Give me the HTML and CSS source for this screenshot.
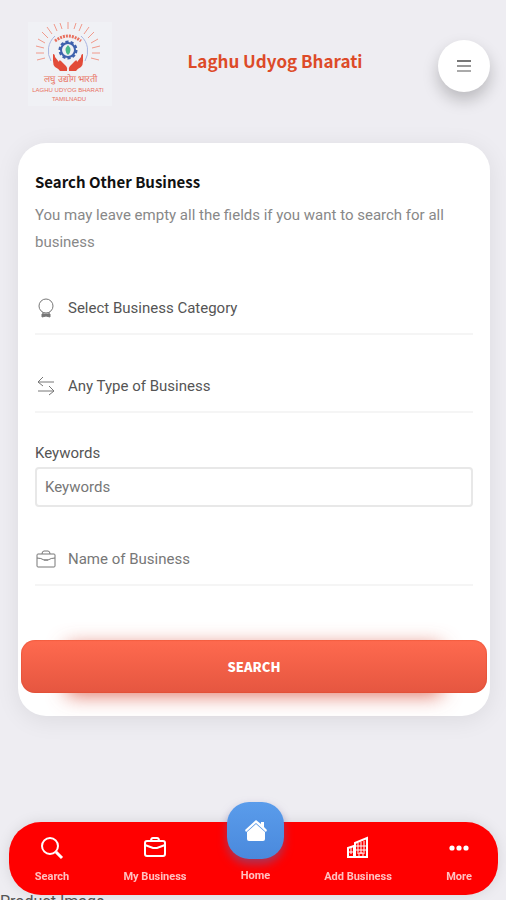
FILE: index.html
```html
<!DOCTYPE html>
<html lang="en">
<head>
    <meta charset="UTF-8">
    <meta name="viewport" content="width=device-width, initial-scale=1.0">
    <title>Laghu Udyog Bharati</title>
    <link rel="stylesheet" href="styles.css">
</head>
<body>
    <header class="header">
        <a href="#" class="logo" aria-label="Laghu Udyog Bharati Tamilnadu">
            <svg viewBox="0 0 84 84" width="84" height="84">
                <!-- sun rays -->
                <g fill="none" stroke="#f09a8c">
                    <path d="M17 36l-8 2M16 31l-8 0M16 26l-8-2M17 21l-7-4M20 16l-6-6M24 12l-5-7M29 9l-3-7M34 7l-2-6M40 7V0M46 7l2-6M51 9l3-7M56 12l5-7M60 16l6-6M63 21l7-4M64 26l8-2M64 31h8M63 36l8 2"/>
                    <path d="M27 19Q40 9 53 19" stroke="#e8705f" stroke-width="3" stroke-dasharray="2 1"/>
                </g>
                <path d="M23 39A20 20 0 0 1 27 14M53 14A20 20 0 0 1 57 39" fill="none" stroke="#a9b5e2"/>
                <!-- gear -->
                <circle cx="40" cy="28" r="8" fill="none" stroke="#3f62ad" stroke-width="3" stroke-dasharray="3 2"/>
                <circle cx="40" cy="28" r="7" fill="none" stroke="#3f62ad" stroke-width="2"/>
                <path d="M40 23q-5 5 0 10q5-5 0-10z" fill="#49b98b"/>
                <!-- hands -->
                <g fill="#e24b39">
                    <path d="M25 32q2 0 2 3l4 5q0-3 2-1l5 5q2 2 1 5h-7q-1-2-5-4q-2-2-2-6z"/>
                    <path d="M55 32q-2 0-2 3l-4 5q0-3-2-1l-5 5q-2 2-1 5h7q1-2 5-4q2-2 2-6z"/>
                </g>
                <g class="logo-text" text-anchor="middle">
                    <text x="43" y="60" class="logo-hindi">लघु उद्योग भारती</text>
                    <text x="40" y="70">LAGHU UDYOG BHARATI</text>
                    <text x="41" y="79">TAMILNADU</text>
                </g>
            </svg>
        </a>
        <h1 class="title">Laghu Udyog Bharati</h1>
        <button class="menu-btn" type="button" aria-label="Menu">
            <svg viewBox="0 0 14 14" width="14" height="14" fill="none" stroke-width="2">
                <path d="M0 2h14" stroke="#777"/>
                <path d="M0 7h14" stroke="#999"/>
                <path d="M0 12h14" stroke="#aaa"/>
            </svg>
        </button>
    </header>

    <main>
        <form class="card">
            <h2>Search Other Business</h2>
            <p class="intro">You may leave empty all the fields if you want to search for all business</p>

            <div class="field">
                <svg viewBox="0 0 22 22" width="22" height="22" fill="none" stroke="#777">
                    <circle cx="11" cy="9" r="7"/>
                    <path d="M8 15v2M14 15v2"/>
                    <path d="M7 17h8v3l-4-1l-4 1z" fill="#777"/>
                </svg>
                <select aria-label="Business category">
                    <option>Select Business Category</option>
                </select>
            </div>

            <div class="field">
                <svg viewBox="0 0 22 22" width="22" height="22" fill="none" stroke="#777">
                    <path d="M8 2L3 7l5 4M3 7h16"/>
                    <path d="M14 11l5 5l-5 4M19 16H3"/>
                </svg>
                <select aria-label="Type of business">
                    <option>Any Type of Business</option>
                </select>
            </div>

            <label class="keywords-label" for="keywords">Keywords</label>
            <input class="keywords" type="text" id="keywords" placeholder="Keywords">

            <div class="field">
                <svg viewBox="0 0 22 22" width="22" height="22" fill="none" stroke="#777">
                    <rect x="2" y="6" width="18" height="13" rx="1"/>
                    <path d="M7 6q0-3 2-3h4q2 0 2 3M2 10q4 0 7 2h4q3-2 7-2M9 12h4"/>
                </svg>
                <input type="text" aria-label="Name of business" placeholder="Name of Business">
            </div>

            <button class="search-btn" type="submit">SEARCH</button>
        </form>
        <p class="product">Product Image</p>
    </main>

    <nav class="tabbar">
        <a href="#">
            <svg viewBox="0 0 24 24" width="24" height="24" fill="none" stroke="#fff" stroke-width="2">
                <circle cx="10" cy="10" r="8"/>
                <path d="M16 16l6 6" stroke-width="3"/>
            </svg>
            <span>Search</span>
        </a>
        <a href="#">
            <svg viewBox="0 0 24 24" width="24" height="24" fill="none" stroke="#fff" stroke-width="2">
                <rect x="2" y="5" width="20" height="15" rx="2"/>
                <path d="M8 5q0-3 2-3h4q2 0 2 3M2 9l8 3h4l8-3"/>
            </svg>
            <span>My Business</span>
        </a>
        <a href="#">
            <span class="home-icon">
                <svg viewBox="0 0 24 24" width="24" height="24" fill="#fff">
                    <path d="M12 1L1 11l1 2L12 4l10 9l1-2l-3-3V3h-3v2z"/>
                    <path d="M12 5l9 8v7q0 2-2 2H5q-2 0-2-2v-7z"/>
                </svg>
            </span>
            <span>Home</span>
        </a>
        <a href="#">
            <svg viewBox="0 0 24 24" width="24" height="24" fill="none" stroke="#fff" stroke-width="2">
                <path d="M2 21V12l6-2v11M9 21V7l12-5v19M1 21h21"/>
                <path d="M2 16h6M5 11v7M12 7v11M15 6v12M18 5v13M9 10h12M9 14h12M13 21v-4h4v4" stroke-width="1"/>
            </svg>
            <span>Add Business</span>
        </a>
        <a href="#">
            <svg viewBox="0 0 24 24" width="24" height="24" fill="#fff">
                <circle cx="5" cy="12" r="2.6"/>
                <circle cx="12" cy="12" r="2.6"/>
                <circle cx="19" cy="12" r="2.6"/>
            </svg>
            <span>More</span>
        </a>
    </nav>
</body>
</html>
```

FILE: styles.css
```css
* {
    box-sizing: border-box;
}
body {
    margin: 0;
    height: 100vh;
    overflow: hidden;
    background: #eeedf2;
    font-family: Roboto, sans-serif;
    font-size: 15px;
    color: #555;
}
input, select, button {
    font-family: inherit;
    font-size: inherit;
}
.header {
    display: flex;
    align-items: center;
    justify-content: space-between;
    padding: 22px 16px 0 28px;
}
.logo {
    display: block;
    height: 84px;
    background: #f0f1f5;
}
.logo-text {
    font-family: "Liberation Sans", sans-serif;
    font-size: 6px;
    fill: #e8705f;
}
.logo-hindi {
    font-size: 9px;
}
.title {
    margin: 0;
    padding-bottom: 6px;
    font-family: "Noto Sans CJK SC", sans-serif;
    font-size: 17px;
    line-height: 24px;
    color: #dd4a28;
}
.menu-btn {
    display: flex;
    align-items: center;
    justify-content: center;
    width: 52px;
    height: 52px;
    margin-top: 4px;
    padding: 0;
    border: none;
    border-radius: 50%;
    background: #fff;
    box-shadow: 0 8px 16px rgba(0,0,0,0.22);
}
.card {
    position: relative;
    z-index: 0;
    margin: 37px 16px 0 18px;
    padding: 26px 17px 23px;
    background: #fff;
    border-radius: 28px;
    box-shadow: 0 4px 24px rgba(0,0,0,0.08);
}
.card h2 {
    margin: 0;
    font-family: "Noto Sans CJK SC", sans-serif;
    font-size: 15px;
    line-height: 26px;
    color: #111;
}
.intro {
    margin: 7px 0 26px;
    line-height: 27px;
    color: #888;
}
.field {
    display: flex;
    align-items: center;
    height: 53px;
    margin-bottom: 25px;
    border-bottom: 2px solid #f5f5f5;
}
.field select,
.field input {
    flex: 1;
    margin-left: 11px;
    padding: 0;
    border: none;
    background: none;
    color: #555;
    appearance: none;
}
.keywords-label {
    display: block;
    margin-top: 30px;
    line-height: 20px;
}
.keywords {
    display: block;
    width: 100%;
    height: 40px;
    margin: 4px 0 26px;
    padding: 0 8px;
    border: 2px solid #e8e8e8;
    border-radius: 4px;
}
input::placeholder {
    color: #777;
}
.search-btn {
    position: relative;
    display: block;
    width: calc(100% + 28px);
    height: 53px;
    margin: 54px -14px 0;
    border: none;
    border-radius: 14px;
    background: linear-gradient(#ff6a4f, #e55640);
    box-shadow: inset 0 0 1px 1px rgba(220,65,35,0.3);
    color: #fff;
    font-family: "Noto Sans CJK SC", sans-serif;
    font-size: 13px;
    font-weight: 900;
}
/* glow under the button, narrower than the button itself */
.search-btn::before {
    content: "";
    position: absolute;
    z-index: -1;
    inset: 4px 46px 0;
    box-shadow: 0 2px 20px rgba(215,75,55,0.8);
}
.product {
    margin: 176px 0 0;
    font-size: 16px;
    line-height: 20px;
}
/* fixed bottom navigation */
.tabbar {
    position: fixed;
    z-index: 1;
    left: 9px;
    right: 8px;
    bottom: 5px;
    display: grid;
    grid-template-columns: 86fr 120fr 81fr 124fr 78fr;
    height: 73px;
    padding-top: 14px;
    background: #f00;
    border-radius: 32px;
    box-shadow: 0 0 14px rgba(0,0,0,0.1);
}
.tabbar a {
    display: flex;
    flex-direction: column;
    align-items: center;
    gap: 8px;
    color: #ffc0c0;
    font-size: 11px;
    font-weight: 700;
    line-height: 18px;
    text-decoration: none;
}
.home-icon {
    display: flex;
    align-items: center;
    justify-content: center;
    width: 57px;
    height: 57px;
    margin-top: -34px;
    border-radius: 22px;
    background: linear-gradient(#5a9ceb, #4a89dc);
    box-shadow: 0 5px 10px rgba(110,90,150,0.6);
}
```
